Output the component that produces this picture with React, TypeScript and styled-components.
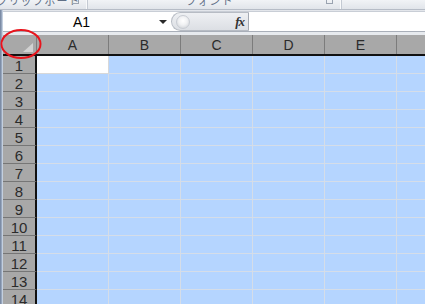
import React, {FC} from "react";
import styled, {createGlobalStyle} from "styled-components";

const GlobalStyle = createGlobalStyle`
  html, body {
    margin: 0;
    padding: 0;
    background: #ffffff;
  }
  body {
    width: 425px;
    height: 304px;
    overflow: hidden;
    font-family: "Liberation Sans", "Noto Sans CJK JP", sans-serif;
  }
`

const COLUMNS = ["A", "B", "C", "D", "E", ""]
const ROWS = Array.from({length: 15}, (_, i) => i + 1)

const App: FC = () => {
    return (
        <>
            <GlobalStyle/>
            <Window>
                <Frame/>
                <Main>
                    <Ribbon>
                        <RibbonGroup width={88}>
                            <GroupLabel>クリップボード</GroupLabel>
                            <Launcher/>
                        </RibbonGroup>
                        <RibbonGroup width={254}>
                            <GroupLabel>フォント</GroupLabel>
                            <Launcher/>
                        </RibbonGroup>
                        <RibbonGroup width={100}/>
                    </Ribbon>
                    <FormulaBar>
                        <NameBox>
                            <CellRef>A1</CellRef>
                            <DropArrow/>
                        </NameBox>
                        <FxPill>
                            <Knob/>
                            <Fx>fx</Fx>
                        </FxPill>
                        <FormulaInput/>
                    </FormulaBar>
                    <Gap/>
                    <Sheet>
                        <HeaderRow>
                            <Corner>
                                <CornerTriangle/>
                            </Corner>
                            {COLUMNS.map(c => (
                                <ColHeader key={c || "x"}>{c}</ColHeader>
                            ))}
                        </HeaderRow>
                        {ROWS.map(r => (
                            <Row key={r}>
                                <RowHeader>{r}</RowHeader>
                                {COLUMNS.map((c, i) => (
                                    <Cell key={c || "x"} active={r === 1 && i === 0}/>
                                ))}
                            </Row>
                        ))}
                    </Sheet>
                </Main>
                <Circle viewBox="0 0 44 32">
                    <ellipse cx="21" cy="15" rx="19.5" ry="14" fill="none" stroke="#e8141c" strokeWidth="2"/>
                </Circle>
            </Window>
        </>
    )
}

const Window = styled.div`
  position: relative;
  display: flex;
  width: 425px;
  height: 304px;
  overflow: hidden;
`
const Frame = styled.div`
  width: 3px;
  flex: none;
  background: linear-gradient(to right, #8d9bb1 0, #6b7d9a 1px, #c3cfdf 2px);
`
const Main = styled.div`
  flex: 1;
  display: flex;
  flex-direction: column;
  min-width: 0;
  background: #e3e6eb;
`
const Ribbon = styled.div`
  display: flex;
  height: 9px;
  flex: none;
  margin-left: -3px;
  overflow: hidden;
  background: linear-gradient(#f1f3f6, #e1e5ea);
  border-bottom: 1px solid #b6bcc6;
`
const RibbonGroup = styled.div<{width: number}>`
  position: relative;
  flex: none;
  width: ${({width}) => width}px;
  box-sizing: border-box;
  border-right: 1px solid #c4cad3;
  box-shadow: inset -1px 0 0 #f9fafb;
  display: flex;
  justify-content: center;
`
const GroupLabel = styled.span`
  font-size: 11px;
  line-height: 11px;
  margin-top: -4px;
  margin-right: 10px;
  color: #5f6f86;
  letter-spacing: 1px;
  white-space: nowrap;
`
const Launcher = styled.span`
  position: absolute;
  right: 8px;
  top: 0;
  width: 5px;
  height: 3px;
  border: 1px solid #9aa3b0;
  border-top: none;
`
const FormulaBar = styled.div`
  display: flex;
  align-items: stretch;
  flex: none;
  height: 19px;
  margin-top: 1px;
  border-top: 1px solid #c9ced6;
  border-bottom: 1px solid #a9afb9;
  background: #ffffff;
`
const NameBox = styled.div`
  position: relative;
  width: 168px;
  flex: none;
  display: flex;
  align-items: center;
  justify-content: center;
  background: #ffffff;
`
const CellRef = styled.span`
  font-size: 14px;
  color: #000;
  margin-left: -11px;
`
const DropArrow = styled.span`
  position: absolute;
  right: 4px;
  top: 8px;
  width: 0;
  height: 0;
  border-left: 4px solid transparent;
  border-right: 4px solid transparent;
  border-top: 4px solid #2a2a2a;
`
const FxPill = styled.div`
  position: relative;
  width: 78px;
  flex: none;
  display: flex;
  align-items: center;
  justify-content: flex-end;
  padding-right: 4px;
  box-sizing: border-box;
  background: linear-gradient(#eef0f3, #dcdfe4);
  border: 1px solid #b7bcc4;
  border-right-color: #a3a9b3;
  border-radius: 10px 0 0 10px;
`
const Knob = styled.span`
  position: absolute;
  left: 4px;
  top: 2px;
  width: 12px;
  height: 12px;
  border-radius: 50%;
  background: radial-gradient(circle at 50% 40%, #ffffff 0, #f0f1f3 45%, #c7cbd1 100%);
  border: 1px solid #c8ccd3;
`
const Fx = styled.span`
  font-family: "Liberation Serif", serif;
  font-style: italic;
  font-weight: bold;
  font-size: 13px;
  color: #333;
  letter-spacing: -1px;
`
const FormulaInput = styled.div`
  flex: 1;
  background: #ffffff;
`
const Gap = styled.div`
  height: 3px;
  flex: none;
  background: #e7eaee;
`
const Sheet = styled.div`
  flex: 1;
  display: flex;
  flex-direction: column;
  background: #b5d5ff;
  overflow: hidden;
`
const HeaderRow = styled.div`
  display: flex;
  height: 19px;
  flex: none;
  background: #a8a8a8;
  border-bottom: 2px solid #111;
`
const Corner = styled.div`
  position: relative;
  width: 34px;
  flex: none;
  box-sizing: border-box;
  border-right: 1px solid #7c7c7c;
`
const CornerTriangle = styled.span`
  position: absolute;
  right: 3px;
  bottom: 2px;
  width: 0;
  height: 0;
  border-left: 10px solid transparent;
  border-bottom: 9px solid #d2d2d2;
`
const ColHeader = styled.div`
  width: 72px;
  flex: none;
  box-sizing: border-box;
  border-right: 1px solid #7c7c7c;
  display: flex;
  align-items: center;
  justify-content: center;
  font-size: 14px;
  color: #2b2b2b;
  padding-top: 1px;
`
const Row = styled.div`
  display: flex;
  height: 18px;
  flex: none;
`
const RowHeader = styled.div`
  width: 34px;
  flex: none;
  box-sizing: border-box;
  background: #a8a8a8;
  border-right: 2px solid #111;
  border-bottom: 1px solid #767676;
  display: flex;
  align-items: center;
  justify-content: center;
  font-size: 15px;
  color: #2b2b2b;
  padding-top: 1px;
`
const Cell = styled.div<{active: boolean}>`
  width: 72px;
  flex: none;
  box-sizing: border-box;
  background: ${({active}) => active ? "#ffffff" : "#b5d5ff"};
  border-right: 1px solid ${({active}) => active ? "#d8d8d8" : "#d5dde8"};
  border-bottom: 1px solid ${({active}) => active ? "#d8d8d8" : "#d5dde8"};
`
const Circle = styled.svg`
  position: absolute;
  left: 0;
  top: 29px;
  width: 44px;
  height: 32px;
  overflow: visible;
`

export default App
